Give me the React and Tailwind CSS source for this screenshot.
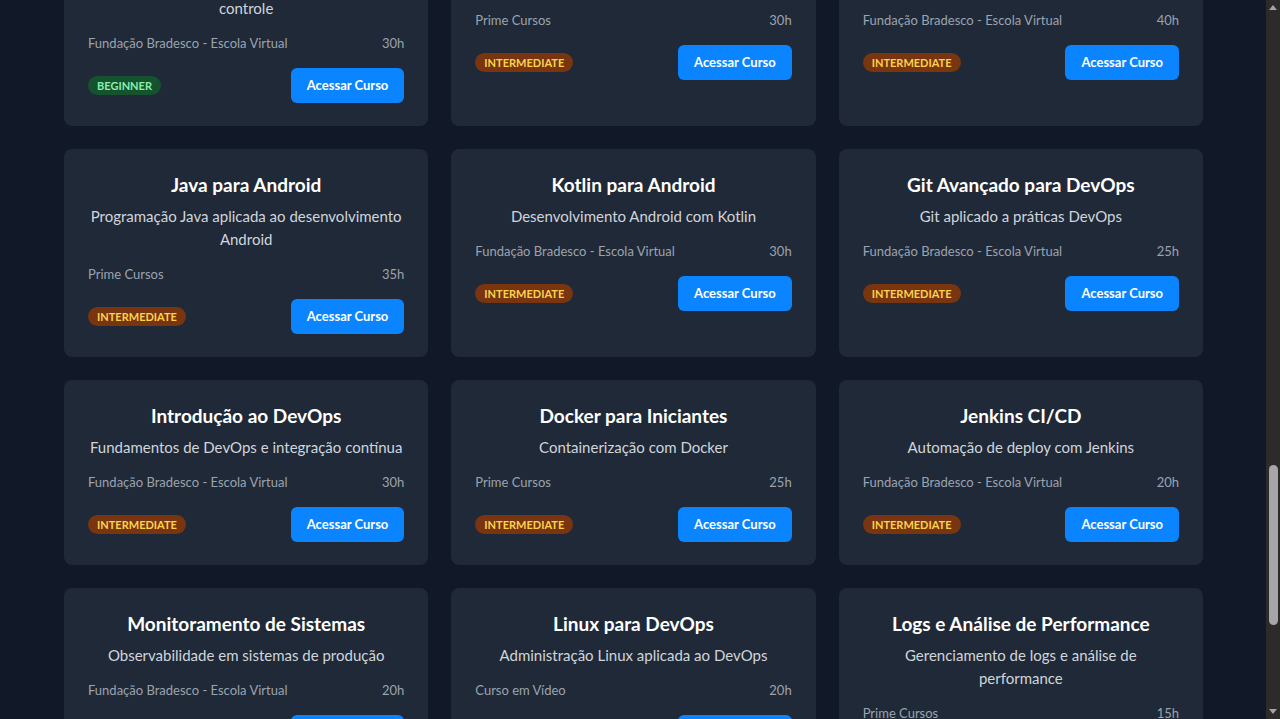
import { useLayoutEffect, useRef } from "react";

const FONT = { fontFamily: "Lato, 'Noto Sans', sans-serif" };

const BADGES = {
  beginner: "bg-[#14532d] text-[#86efac]",
  intermediate: "bg-[#78350f] text-[#fcd34d]",
  advanced: "bg-[#7f1d1d] text-[#fca5a5]",
};

const FB = "Fundação Bradesco - Escola Virtual";
const PC = "Prime Cursos";
const CV = "Curso em Vídeo";

// ── Data ──────────────────────────────────────────────────────────────────────
const courses = [
  { title: "Git e GitHub", desc: "Aprenda a utilizar o Git para versionamento e controle", provider: FB, hours: "30h", level: "beginner" },
  { title: "Flutter para Iniciantes", desc: "Apps multiplataforma com Flutter", provider: PC, hours: "30h", level: "intermediate" },
  { title: "Arquitetura Mobile", desc: "Padrões de projeto para apps", provider: FB, hours: "40h", level: "intermediate" },
  { title: "Java para Android", desc: "Programação Java aplicada ao desenvolvimento Android", provider: PC, hours: "35h", level: "intermediate", anchor: true },
  { title: "Kotlin para Android", desc: "Desenvolvimento Android com Kotlin", provider: FB, hours: "30h", level: "intermediate" },
  { title: "Git Avançado para DevOps", desc: "Git aplicado a práticas DevOps", provider: FB, hours: "25h", level: "intermediate" },
  { title: "Introdução ao DevOps", desc: "Fundamentos de DevOps e integração contínua", provider: FB, hours: "30h", level: "intermediate" },
  { title: "Docker para Iniciantes", desc: "Containerização com Docker", provider: PC, hours: "25h", level: "intermediate" },
  { title: "Jenkins CI/CD", desc: "Automação de deploy com Jenkins", provider: FB, hours: "20h", level: "intermediate" },
  { title: "Monitoramento de Sistemas", desc: "Observabilidade em sistemas de produção", provider: FB, hours: "20h", level: "intermediate" },
  { title: "Linux para DevOps", desc: "Administração Linux aplicada ao DevOps", provider: CV, hours: "20h", level: "intermediate" },
  { title: "Logs e Análise de Performance", desc: "Gerenciamento de logs e análise de performance", provider: PC, hours: "15h", level: "intermediate" },
];

// ── Course card ───────────────────────────────────────────────────────────────
function CourseCard({ course, cardRef }) {
  return (
    <div ref={cardRef} className="bg-[#1f2937] rounded-lg px-6 pt-[22px] pb-[23px] flex flex-col">
      <h3 className="text-white text-[19px] leading-7 font-bold text-center">{course.title}</h3>
      <p className="mt-1.5 text-[15px] leading-[23px] text-[#d1d5db] text-center">{course.desc}</p>
      <div className="mt-[13px] flex items-center justify-between text-[13px] leading-5 text-[#9ca3af]">
        <span>{course.provider}</span>
        <span>{course.hours}</span>
      </div>
      <div className="mt-[15px] flex items-center justify-between">
        <span className={`rounded-full px-[9px] py-[2px] text-[11px] leading-[15px] font-bold uppercase ${BADGES[course.level]}`}>
          {course.level}
        </span>
        <button className="bg-[#0a84ff] hover:bg-[#0070e0] text-white text-[13px] leading-[19px] font-bold rounded-md px-4 py-2">
          Acessar Curso
        </button>
      </div>
    </div>
  );
}

// ── Browser scrollbar (dark) ──────────────────────────────────────────────────
function ScrollBar() {
  return (
    <div className="w-[14px] shrink-0 bg-[#2c2b29] flex flex-col items-center">
      <div className="h-[15px] flex items-center justify-center">
        <svg width="8" height="5" viewBox="0 0 8 5"><path d="M4 0 8 5H0Z" fill="#a3a3a3" /></svg>
      </div>
      <div className="h-[450px]" />
      <div className="w-[9px] h-[160px] rounded-full bg-[#a6a6a6]" />
      <div className="flex-1" />
      <div className="h-[15px] flex items-center justify-center">
        <svg width="8" height="5" viewBox="0 0 8 5"><path d="M0 0H8L4 5Z" fill="#a3a3a3" /></svg>
      </div>
    </div>
  );
}

// ── Page ──────────────────────────────────────────────────────────────────────
export default function App() {
  const scrollRef = useRef(null);
  const anchorRef = useRef(null);

  // page is shown scrolled down to the Android / DevOps courses
  useLayoutEffect(() => {
    const box = scrollRef.current;
    const card = anchorRef.current;
    if (!box || !card) return;
    box.scrollTop = card.getBoundingClientRect().top - box.getBoundingClientRect().top - 149;
  }, []);

  return (
    <div className="h-screen flex bg-[#111827]" style={FONT}>
      <div ref={scrollRef} className="flex-1 overflow-y-auto [scrollbar-width:none]">
        <div className="pl-16 pr-[63px] pb-16">
          <div className="grid grid-cols-3 gap-[23px]">
            {courses.map((c) => (
              <CourseCard key={c.title} course={c} cardRef={c.anchor ? anchorRef : undefined} />
            ))}
          </div>
        </div>
      </div>
      <ScrollBar />
    </div>
  );
}
